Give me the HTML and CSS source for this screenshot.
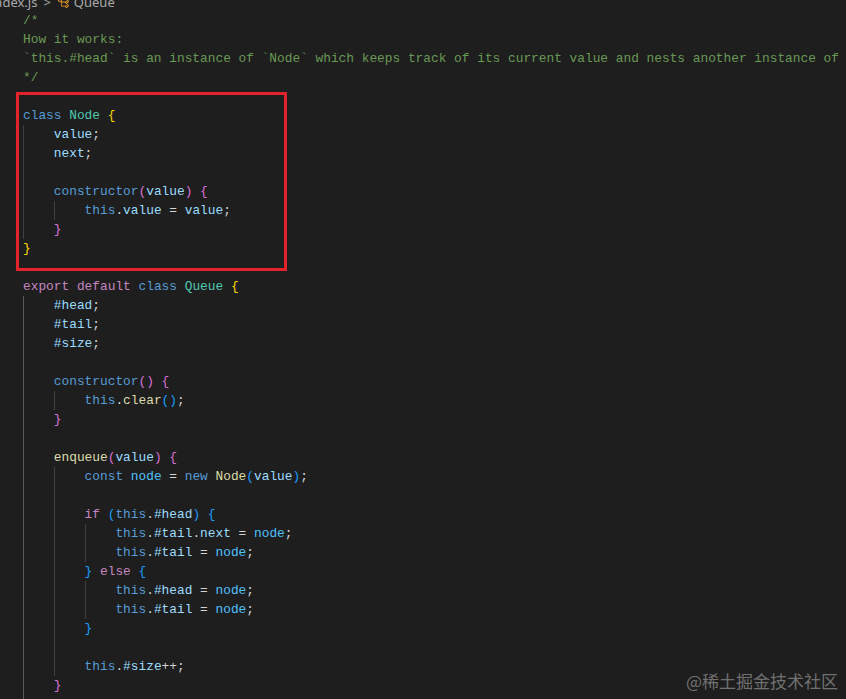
FILE: index.html
```html
<!DOCTYPE html>
<html lang="en">
<head>
<meta charset="utf-8">
<title>index.js - Queue</title>
<link rel="stylesheet" href="styles.css">
</head>
<body>
<div class="window">
  <div class="breadcrumbs">
    <div class="crumb-row">
      <span class="crumb file">index.js</span>
      <span class="crumb sep">&gt;</span>
      <svg class="crumb-icon" viewBox="0 0 16 16" width="13" height="13"><path fill="#ee9d28" d="M11.34 9.71h.71l2.67-2.67v-.71L13.38 5h-.7l-1.82 1.81h-5V5.56l1.86-1.85V3l-2-2H5L1 5v.71l2 2h.71l1.14-1.15v5.79l.5.5H10v.52l1.33 1.34h.71l2.670-2.67v-.71L13.37 10h-.7l-1.86 1.85h-5v-4H10v.48l1.34 1.38zm1.69-3.65l.63.63-2 2-.63-.63 2-2zm0 5l.63.63-2 2-.63-.63 2-2zM3.35 6.65l-1.29-1.3 3.29-3.29 1.3 1.29-3.3 3.3z"/></svg>
      <span class="crumb">Queue</span>
    </div>
  </div>

  <div class="editor">
    <div class="line"><span class="c">/*</span></div>
    <div class="line"><span class="c">How it works:</span></div>
    <div class="line"><span class="c">`this.#head` is an instance of `Node` which keeps track of its current value and nests another instance of</span></div>
    <div class="line"><span class="c">*/</span></div>
    <div class="line"> </div>
    <div class="line"><span class="k">class</span> <span class="t">Node</span> <span class="b1">{</span></div>
    <div class="line"><span class="ig">    </span><span class="v">value</span><span class="p">;</span></div>
    <div class="line"><span class="ig">    </span><span class="v">next</span><span class="p">;</span></div>
    <div class="line"><span class="ig">    </span></div>
    <div class="line"><span class="ig">    </span><span class="k">constructor</span><span class="b2">(</span><span class="v">value</span><span class="b2">)</span> <span class="b2">{</span></div>
    <div class="line"><span class="ig">    </span><span class="ig">    </span><span class="k">this</span><span class="p">.</span><span class="v">value</span> <span class="p">=</span> <span class="v">value</span><span class="p">;</span></div>
    <div class="line"><span class="ig">    </span><span class="b2">}</span></div>
    <div class="line"><span class="b1">}</span></div>
    <div class="line"> </div>
    <div class="line"><span class="ctl">export</span> <span class="ctl">default</span> <span class="k">class</span> <span class="t">Queue</span> <span class="b1">{</span></div>
    <div class="line"><span class="ig ig-a">    </span><span class="v">#head</span><span class="p">;</span></div>
    <div class="line"><span class="ig ig-a">    </span><span class="v">#tail</span><span class="p">;</span></div>
    <div class="line"><span class="ig ig-a">    </span><span class="v">#size</span><span class="p">;</span></div>
    <div class="line"><span class="ig ig-a">    </span></div>
    <div class="line"><span class="ig ig-a">    </span><span class="k">constructor</span><span class="b2">()</span> <span class="b2">{</span></div>
    <div class="line"><span class="ig ig-a">    </span><span class="ig">    </span><span class="k">this</span><span class="p">.</span><span class="f">clear</span><span class="b3">()</span><span class="p">;</span></div>
    <div class="line"><span class="ig ig-a">    </span><span class="b2">}</span></div>
    <div class="line"><span class="ig ig-a">    </span></div>
    <div class="line"><span class="ig ig-a">    </span><span class="f">enqueue</span><span class="b2">(</span><span class="v">value</span><span class="b2">)</span> <span class="b2">{</span></div>
    <div class="line"><span class="ig ig-a">    </span><span class="ig">    </span><span class="k">const</span> <span class="n">node</span> <span class="p">=</span> <span class="k">new</span> <span class="f">Node</span><span class="b3">(</span><span class="v">value</span><span class="b3">)</span><span class="p">;</span></div>
    <div class="line"><span class="ig ig-a">    </span><span class="ig">    </span></div>
    <div class="line"><span class="ig ig-a">    </span><span class="ig">    </span><span class="ctl">if</span> <span class="b3">(</span><span class="k">this</span><span class="p">.</span><span class="v">#head</span><span class="b3">)</span> <span class="b3">{</span></div>
    <div class="line"><span class="ig ig-a">    </span><span class="ig">    </span><span class="ig">    </span><span class="k">this</span><span class="p">.</span><span class="v">#tail</span><span class="p">.</span><span class="v">next</span> <span class="p">=</span> <span class="n">node</span><span class="p">;</span></div>
    <div class="line"><span class="ig ig-a">    </span><span class="ig">    </span><span class="ig">    </span><span class="k">this</span><span class="p">.</span><span class="v">#tail</span> <span class="p">=</span> <span class="n">node</span><span class="p">;</span></div>
    <div class="line"><span class="ig ig-a">    </span><span class="ig">    </span><span class="b3">}</span> <span class="ctl">else</span> <span class="b3">{</span></div>
    <div class="line"><span class="ig ig-a">    </span><span class="ig">    </span><span class="ig">    </span><span class="k">this</span><span class="p">.</span><span class="v">#head</span> <span class="p">=</span> <span class="n">node</span><span class="p">;</span></div>
    <div class="line"><span class="ig ig-a">    </span><span class="ig">    </span><span class="ig">    </span><span class="k">this</span><span class="p">.</span><span class="v">#tail</span> <span class="p">=</span> <span class="n">node</span><span class="p">;</span></div>
    <div class="line"><span class="ig ig-a">    </span><span class="ig">    </span><span class="b3">}</span></div>
    <div class="line"><span class="ig ig-a">    </span><span class="ig">    </span></div>
    <div class="line"><span class="ig ig-a">    </span><span class="ig">    </span><span class="k">this</span><span class="p">.</span><span class="v">#size</span><span class="p">++;</span></div>
    <div class="line"><span class="ig ig-a">    </span><span class="b2">}</span></div>
    <div class="line"><span class="ig ig-a">    </span></div>
  </div>

  <div class="highlight-box"></div>
  <div class="watermark">@稀土掘金技术社区</div>
</div>
</body>
</html>
```

FILE: styles.css
```css
html, body {
  margin: 0;
  padding: 0;
  background: #1e1e1e;
}

.window {
  position: relative;
  width: 846px;
  height: 699px;
  overflow: hidden;
  background: #1e1e1e;
}

.breadcrumbs {
  height: 11px;
  overflow: hidden;
}

.crumb-row {
  display: flex;
  align-items: center;
  gap: 5px;
  margin-top: -8px;
  height: 20px;
  font-family: "Noto Sans", "Open Sans", sans-serif;
  font-size: 13px;
  line-height: 20px;
  color: #a9a9a9;
}

.crumb.file {
  margin-left: -9px;
}

.crumb.sep {
  margin: 0 1px;
}

.crumb-icon {
  flex: none;
  margin-right: -1px;
}

.editor {
  padding-left: 23px;
  font-family: "Liberation Mono", monospace;
  font-size: 12.83px;
  line-height: 19px;
  color: #d4d4d4;
}

.line {
  height: 19px;
  white-space: pre;
  overflow: hidden;
}

.ig {
  display: inline-block;
  height: 19px;
  vertical-align: top;
  white-space: pre;
  box-shadow: inset 1px 0 0 #404040;
}

.ig-a {
  box-shadow: inset 1px 0 0 #5a5a5a;
}

.c { color: #6a9955; }
.k { color: #569cd6; }
.ctl { color: #c586c0; }
.t { color: #4ec9b0; }
.v { color: #9cdcfe; }
.n { color: #4fc1ff; }
.f { color: #dcdcaa; }
.p { color: #d4d4d4; }
.b1 { color: #ffd700; }
.b2 { color: #da70d6; }
.b3 { color: #179fff; }

.highlight-box {
  position: absolute;
  left: 16px;
  top: 92px;
  width: 265px;
  height: 173px;
  border: 3px solid #e3242b;
}

.watermark {
  position: absolute;
  right: 8px;
  top: 669px;
  font-family: "Noto Sans CJK SC", sans-serif;
  font-size: 17px;
  line-height: 24px;
  color: #707070;
}
```
